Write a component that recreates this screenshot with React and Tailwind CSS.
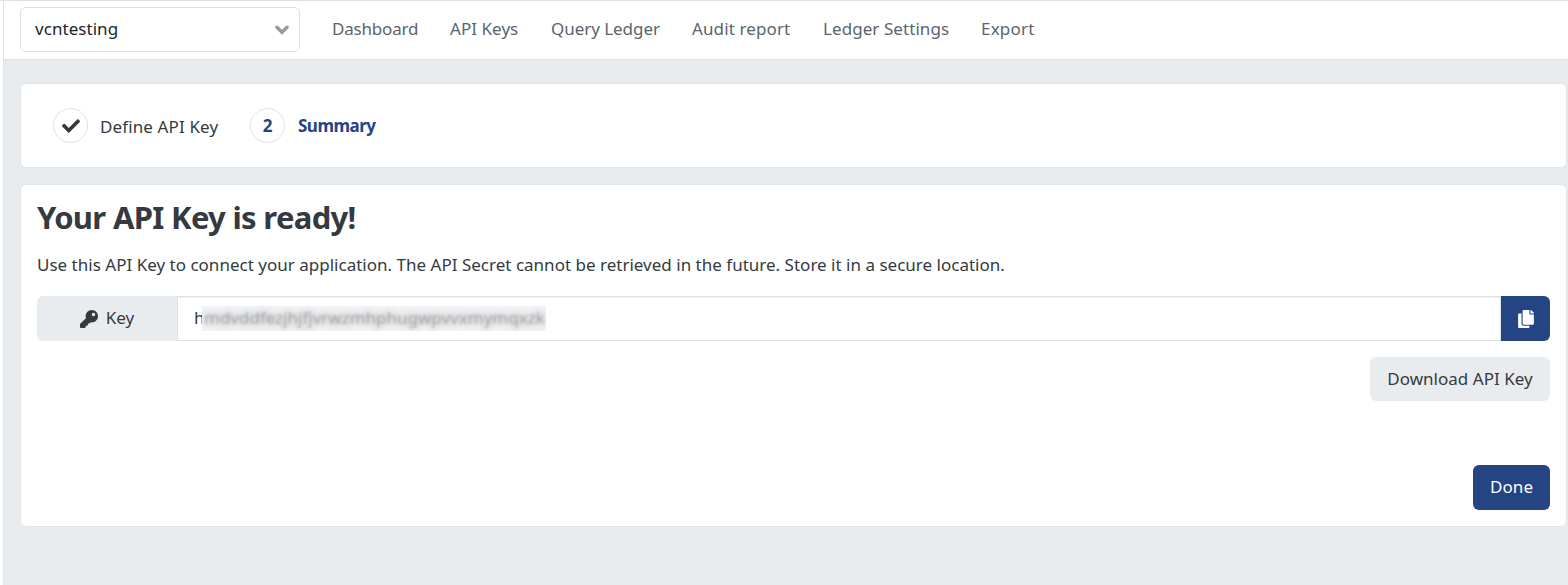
import { FaCheck, FaCopy, FaKey } from "react-icons/fa";

const links = [
  { label: "Dashboard", size: "w-[86px] tracking-[-0.2px]" },
  { label: "API Keys", size: "w-[69px] tracking-[0.05px]" },
  { label: "Query Ledger", size: "w-[109px] tracking-[-0.05px]" },
  { label: "Audit report", size: "w-[99px] tracking-[0.12px]" },
  { label: "Ledger Settings", size: "w-[126px] tracking-[0.07px]" },
  { label: "Export", size: "w-[54px] tracking-[0.2px]" },
];

function Header() {
  return (
    <header className="flex h-[60px] items-center border-y border-[#dee2e6] bg-white pl-4">
      <button className="-mt-px flex h-[45px] w-[280px] items-center justify-between rounded-md border border-[#dee2e6] pr-[10px] pl-[14px] text-[#212529]">
        <span className="-mt-px tracking-[0.05px]">vcntesting</span>
        <svg viewBox="0 0 14 10" className="h-[10px] w-[14px] fill-none stroke-[#999] stroke-[3.5]" strokeLinecap="round">
          <path d="M2 2.3 7 7.3l5-5" />
        </svg>
      </button>
      <nav className="-mt-[2px] ml-8 flex gap-8 text-[#5b646d]">
        {links.map(({ label, size }) => (
          <a key={label} className={"block whitespace-nowrap " + size}>{label}</a>
        ))}
      </nav>
    </header>
  );
}

function Steps() {
  return (
    <section className="flex h-[85px] items-center rounded-md border border-[#e3e5e7] bg-white pl-8">
      <span className="flex size-[35px] items-center justify-center rounded-full border border-[#dee2e6]">
        <FaCheck className="size-[18px]" />
      </span>
      <span className="mt-[3px] ml-3 w-[119px] whitespace-nowrap tracking-[0.12px]">Define API Key</span>
      <span className="ml-[31px] flex size-[35px] items-center justify-center rounded-full border border-[#dee2e6] font-bold text-[#244484]">2</span>
      <span className="ml-[13px] font-bold whitespace-nowrap tracking-[-0.5px] text-[#244484]">Summary</span>
    </section>
  );
}

function KeyField() {
  return (
    <div className="mt-[18px] flex h-[45px]">
      <div className="flex w-[140px] items-center justify-center gap-2 rounded-l-md bg-[#e9ecef]">
        <FaKey className="size-[18px]" />
        <span className="-mt-px">Key</span>
      </div>
      <div className="flex flex-1 items-center border border-[#dee2e6] pl-4 shadow-[inset_0_1px_1px_rgba(0,0,0,0.06)]">
        <span className="-mt-px w-2">h</span>
        <span className="flex h-[25px] w-[344px] items-center overflow-hidden bg-[#f1f2f3]">
          <span className="-mt-px pl-[2px] whitespace-nowrap text-[#75797d]/40 blur-[0.9px] [text-shadow:0_0_6px_#8a8d90]">mdvddfezjhjfjvrwzmhphugwpvvxmymqxzk</span>
        </span>
      </div>
      <button className="flex w-[49px] items-center justify-center rounded-r-md bg-[#244484] text-white">
        <FaCopy className="size-[18px]" />
      </button>
    </div>
  );
}

export default function App() {
  return (
    <div className="flex h-[585px] w-full overflow-hidden bg-white font-['Noto_Sans',sans-serif] text-[17px] leading-[26px] text-[#343a40]">
      <div className="w-[3px] border-t border-[#dee2e6]" />
      <div className="flex-1 border-l border-[#dee2e6] bg-[#e8ebee]">
        <Header />
        <main className="flex flex-col gap-4 pt-[23px] pr-px pl-4">
          <Steps />
          <section className="h-[343px] rounded-md border border-[#e3e5e7] bg-white px-4 pt-[13px]">
            <h1 className="text-[31px] leading-[38px] font-bold whitespace-nowrap tracking-[-0.68px]">Your API Key is ready!</h1>
            <p className="mt-4 whitespace-nowrap tracking-[0.01px]">
              Use this API Key to connect your application. The API Secret cannot be retrieved in the future. Store it in a secure location.
            </p>
            <KeyField />
            <div className="mt-4 flex flex-col items-end">
              <button className="h-11 w-[180px] rounded-md bg-[#e9ecef] whitespace-nowrap tracking-[0.02px]">Download API Key</button>
              <button className="mt-16 h-[45px] w-[77px] rounded-md bg-[#244484] pb-px tracking-[0.1px] text-white">Done</button>
            </div>
          </section>
        </main>
      </div>
    </div>
  );
}
